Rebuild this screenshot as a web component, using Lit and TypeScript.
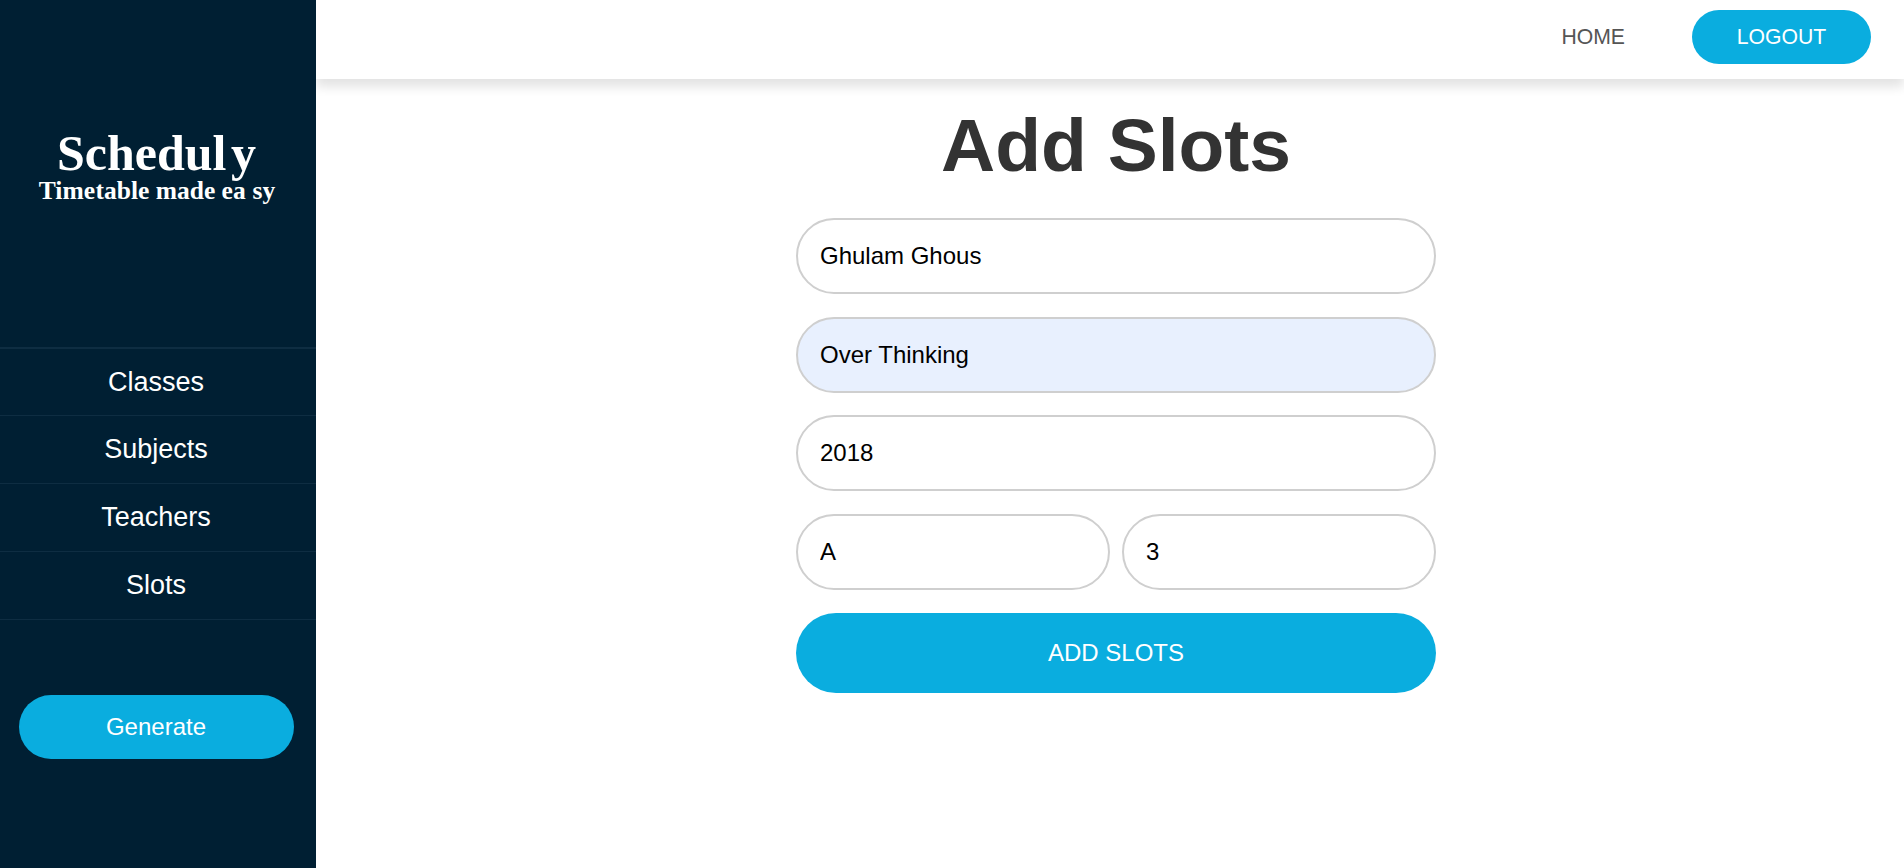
import { LitElement, html, css } from "lit";
import { customElement, state } from "lit/decorators.js";

@customElement("side-bar")
export class SideBar extends LitElement {
  static styles = css`
    :host {
      display: flex;
      flex-direction: column;
      width: 316px;
      flex: none;
      box-sizing: border-box;
      padding: 128px 4px 0 0;
      background: #001f33;
      color: #fff;
      position: relative;
      z-index: 2;
      text-align: center;
    }
    .brand {
      height: 219px;
      font-family: "Liberation Serif", "Times New Roman", serif;
      font-weight: 700;
      white-space: nowrap;
    }
    .name {
      font-size: 50px;
      line-height: 51px;
      padding-left: 1px;
    }
    .tail {
      margin-left: 4.5px;
    }
    .tagline {
      font-size: 25.5px;
      line-height: 24px;
      padding-left: 2px;
    }
    .gap {
      margin-left: 0.5px;
    }
    .menu {
      list-style: none;
      margin: 0 -4px 0 0;
      padding: 0;
      border-top: 2px solid #0e2d42;
    }
    .item {
      height: 66px;
      line-height: 66px;
      font-size: 27px;
      padding-right: 4px;
      border-bottom: 1px solid #0e2d42;
    }
    .item + .item {
      height: 67px;
      line-height: 67px;
    }
    .generate {
      margin: 75px 0 0 19px;
      width: 275px;
      height: 64px;
      border: 0;
      padding: 0 1px 0 0;
      border-radius: 32px;
      background: #0aaddf;
      color: #fff;
      font: 24px "Liberation Sans", Arial, sans-serif;
    }
  `;

  private links = ["Classes", "Subjects", "Teachers", "Slots"];

  render() {
    return html`
      <div class="brand">
        <div class="name">Schedul<span class="tail">y</span></div>
        <div class="tagline">Time<span class="gap">table</span> made ea <span class="gap">sy</span></div>
      </div>
      <ul class="menu">
        ${this.links.map((l) => html`<li class="item">${l}</li>`)}
      </ul>
      <button class="generate">Generate</button>
    `;
  }
}

@customElement("slot-form")
export class SlotForm extends LitElement {
  static styles = css`
    :host {
      display: flex;
      flex-direction: column;
      align-items: center;
      padding-left: 12px;
    }
    .title {
      margin: 0;
      padding-top: 24px;
      height: 115px;
      line-height: 84px;
      font-size: 75px;
      font-weight: 700;
      color: #333;
    }
    .form {
      display: grid;
      grid-template-columns: 1fr 1fr;
      column-gap: 12px;
      row-gap: 22.67px;
      width: 640px;
    }
    .field {
      box-sizing: border-box;
      width: 100%;
      min-width: 0;
      height: 76px;
      padding: 0 22px;
      border: 2px solid #cfcfcf;
      border-radius: 38px;
      background: #fff;
      color: #000;
      font: 24px "Liberation Sans", Arial, sans-serif;
      outline: none;
    }
    .wide {
      grid-column: 1 / -1;
    }
    .filled {
      background: #e8f0fe;
    }
    .submit {
      height: 80px;
      border: 0;
      border-radius: 40px;
      background: #0aaddf;
      color: #fff;
      font: 24px "Liberation Sans", Arial, sans-serif;
    }
  `;

  @state() private teacher = "Ghulam Ghous";
  @state() private subject = "Over Thinking";
  @state() private year = "2018";
  @state() private section = "A";
  @state() private hours = "3";

  render() {
    return html`
      <h1 class="title">Add Slots</h1>
      <div class="form">
        <input class="field wide" .value=${this.teacher} />
        <input class="field wide filled" .value=${this.subject} />
        <input class="field wide" .value=${this.year} />
        <input class="field" .value=${this.section} />
        <input class="field" .value=${this.hours} />
        <button class="submit wide">ADD SLOTS</button>
      </div>
    `;
  }
}

@customElement("app-root")
export class AppRoot extends LitElement {
  static styles = css`
    :host {
      display: flex;
      height: 100vh;
      overflow: hidden;
      background: #fff;
      font-family: "Liberation Sans", Arial, sans-serif;
    }
    .page {
      flex: 1;
      min-width: 0;
    }
    .bar {
      display: flex;
      justify-content: flex-end;
      align-items: center;
      gap: 67px;
      box-sizing: border-box;
      height: 79px;
      padding: 0 33px 5px 0;
      box-shadow: 0 8px 10px rgba(0, 0, 0, 0.11);
      font-size: 21.2px;
    }
    .home {
      color: #555;
    }
    .logout {
      width: 179px;
      height: 54px;
      border: 0;
      padding: 0;
      border-radius: 27px;
      background: #0aaddf;
      color: #fff;
      font: inherit;
    }
  `;

  render() {
    return html`
      <side-bar></side-bar>
      <div class="page">
        <header class="bar">
          <span class="home">HOME</span>
          <button class="logout">LOGOUT</button>
        </header>
        <slot-form></slot-form>
      </div>
    `;
  }
}
